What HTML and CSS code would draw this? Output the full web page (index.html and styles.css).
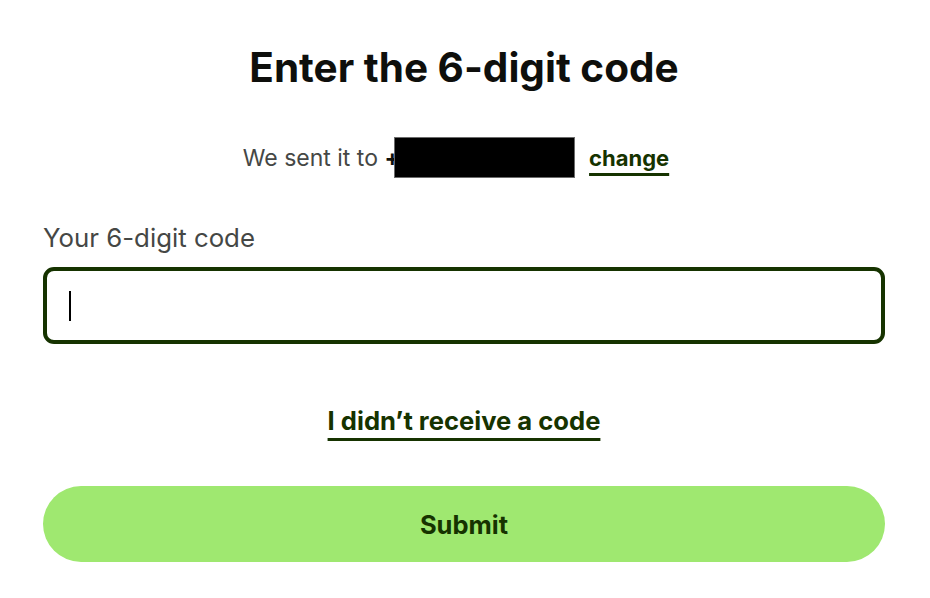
FILE: index.html
```html
<!DOCTYPE html>
<html lang="en">
<head>
<meta charset="utf-8">
<title>Enter the 6-digit code</title>
<link rel="stylesheet" href="styles.css">
</head>
<body>
<main class="page">
  <h1 class="title">Enter the 6-digit code</h1>
  <p class="sent">
    <span class="sent-text">We sent it to&nbsp;</span><span class="phone">+</span><span class="redacted" aria-label="hidden phone number"></span><a class="link change" href="#">change</a>
  </p>
  <label class="label" for="code">Your 6-digit code</label>
  <div class="field" id="code" role="textbox" tabindex="0"><span class="caret"></span></div>
  <div class="resend-row"><a class="link resend" href="#">I didn’t receive a code</a></div>
  <button class="submit" type="button">Submit</button>
</main>
</body>
</html>
```

FILE: styles.css
```css
* { box-sizing: border-box; }
html, body { margin: 0; padding: 0; background: #fff; }
body {
  font-family: Inter, "Noto Sans", "Liberation Sans", sans-serif;
  color: #0e0f0c;
}
.page {
  width: 842px;
  margin: 0 0 0 43px;
  padding-top: 44px;
  display: flex;
  flex-direction: column;
}
.title {
  margin: 0;
  font-size: 40.5px;
  line-height: 48px;
  font-weight: 700;
  text-align: center;
}
.sent {
  margin: 45px 0 0;
  padding-right: 16px;
  display: flex;
  justify-content: center;
  align-items: center;
  font-size: 23px;
  line-height: 32px;
  color: #454745;
}
.phone {
  color: #0e0f0c;
  font-weight: 700;
}
.redacted {
  display: inline-block;
  width: 181px;
  height: 41px;
  background: #000;
  border: 1px solid #6b6b6b;
  margin-left: -6px;
  margin-right: 14px;
}
.link {
  color: #163300;
  font-weight: 700;
  text-decoration: underline;
  text-decoration-thickness: 3px;
}
.change { font-size: 22px; line-height: 32px; text-underline-offset: 7px; }
.label {
  margin-top: 43px;
  font-size: 25.8px;
  line-height: 34px;
  color: #454745;
}
.field {
  margin-top: 12px;
  height: 77px;
  border: 4px solid #163300;
  border-radius: 11px;
  padding: 0 22px;
  display: flex;
  align-items: center;
  outline: none;
}
.caret {
  display: block;
  width: 2px;
  height: 30px;
  background: #000;
}
.resend-row {
  margin-top: 60px;
  display: flex;
  justify-content: center;
}
.resend { font-size: 25.6px; line-height: 34px; text-underline-offset: 8px; }
.submit {
  margin-top: 48px;
  height: 76px;
  border: none;
  border-radius: 38px;
  background: #9fe870;
  color: #163300;
  font-family: inherit;
  font-size: 25.5px;
  font-weight: 700;
  cursor: pointer;
}
```
